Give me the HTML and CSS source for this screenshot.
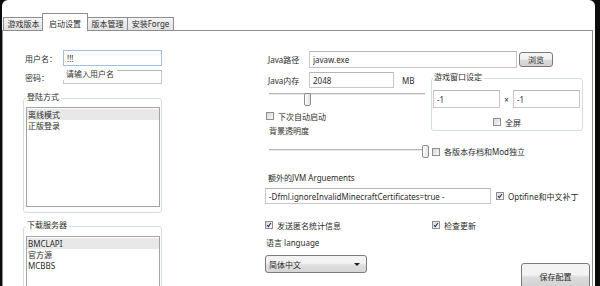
FILE: index.html
```html
<!DOCTYPE html>
<html lang="zh-CN">
<head>
    <meta charset="UTF-8">
    <title>启动设置</title>
    <link rel="stylesheet" href="styles.css">
</head>
<body>
    <div class="window">
        <div class="tabs">
            <div class="tab">游戏版本</div>
            <div class="tab active">启动设置</div>
            <div class="tab">版本管理</div>
            <div class="tab wide">安装Forge</div>
        </div>

        <div class="panel">
            <div class="left">
                <div class="field-row">
                    <label>用户名：</label>
                    <input class="txt focus" type="text" value="!!!">
                </div>
                <div class="field-row short">
                    <label>密码：</label>
                    <span class="pwd-wrap">
                        <input class="txt" type="password">
                        <span class="hint">请输入用户名</span>
                    </span>
                </div>

                <fieldset class="group">
                    <legend>登陆方式</legend>
                    <div class="list tall">
                        <div class="item selected">离线模式</div>
                        <div class="item">正版登录</div>
                    </div>
                </fieldset>

                <fieldset class="group second">
                    <legend>下载服务器</legend>
                    <div class="list">
                        <div class="item selected">BMCLAPI</div>
                        <div class="item">官方源</div>
                        <div class="item">MCBBS</div>
                    </div>
                </fieldset>
            </div>

            <div class="right">
                <div class="row-path">
                    <span class="lbl">Java路径</span>
                    <input class="txt path" type="text" value="javaw.exe">
                    <button class="btn browse">浏览</button>
                </div>

                <div class="mid">
                    <div class="mid-left">
                        <div class="row-mem">
                            <span class="lbl">Java内存</span>
                            <input class="txt mem" type="text" value="2048">
                            <span class="unit">MB</span>
                        </div>
                        <div class="slider">
                            <div class="track"></div>
                            <div class="thumb" style="left: 35px"></div>
                        </div>
                        <div class="opt auto">
                            <span class="check"></span>下次自动启动
                        </div>
                        <div class="lbl-bg">背景透明度</div>
                    </div>

                    <fieldset class="winset">
                        <legend>游戏窗口设定</legend>
                        <div class="xy">
                            <input class="txt size" type="text" value="-1">
                            <span class="times">×</span>
                            <input class="txt size" type="text" value="-1">
                        </div>
                        <div class="opt full">
                            <span class="check"></span>全屏
                        </div>
                    </fieldset>
                </div>

                <div class="row-s2">
                    <div class="slider">
                        <div class="track"></div>
                        <div class="thumb" style="left: 153px"></div>
                    </div>
                    <div class="opt isolate">
                        <span class="check"></span>各版本存档和Mod独立
                    </div>
                </div>

                <div class="lbl-jvm">额外的JVM Arguements</div>
                <div class="row-jvm">
                    <input class="txt jvm" type="text" value="-Dfml.ignoreInvalidMinecraftCertificates=true -">
                    <div class="opt">
                        <span class="check on"><svg viewBox="0 0 8 8"><path d="M1.4 4.2 L3.1 6.2 L6.6 1.3"/></svg></span>Optifine和中文补丁
                    </div>
                </div>

                <div class="row-checks">
                    <div class="opt stats">
                        <span class="check on"><svg viewBox="0 0 8 8"><path d="M1.4 4.2 L3.1 6.2 L6.6 1.3"/></svg></span>发送匿名统计信息
                    </div>
                    <div class="opt">
                        <span class="check on"><svg viewBox="0 0 8 8"><path d="M1.4 4.2 L3.1 6.2 L6.6 1.3"/></svg></span>检查更新
                    </div>
                </div>

                <div class="lbl-lang">语言 language</div>
                <div class="row-bottom">
                    <div class="combo">
                        <span>简体中文</span>
                        <span class="caret"></span>
                    </div>
                    <button class="btn save">保存配置</button>
                </div>
            </div>
        </div>
    </div>
</body>
</html>
```

FILE: styles.css
```css
* {
    box-sizing: border-box;
}

body {
    margin: 0;
    background-color: #0c0c0c;
    font-family: "Noto Sans", "Noto Sans CJK SC", sans-serif;
    font-size: 8px;
    color: #2b2b2b;
    overflow: hidden;
}

.window {
    margin-left: 2px;
    width: 593px;
    height: 286px;
    background-color: #fff;
    border-radius: 6px 6px 0 0;
    overflow: hidden;
}

/* tab strip */
.tabs {
    display: flex;
    align-items: flex-end;
    height: 30px;
    padding-left: 1px;
}

.tab {
    width: 41px;
    height: 13px;
    margin-right: -1px;
    border: 1px solid #8c8e94;
    border-bottom: 0;
    background: linear-gradient(#f4f4f4, #e1e1e1);
    text-align: center;
    line-height: 12px;
    white-space: nowrap;
}

.tab.wide {
    width: 47px;
}

.tab.active {
    position: relative;
    z-index: 1;
    width: 46px;
    height: 18px;
    margin: 0 -1px -1px -1px;
    padding-top: 3px;
    line-height: 13px;
    background: #fff;
}

.panel {
    display: flex;
    width: 591px;
    height: 256px;
    border: 1px solid #8c8e94;
    border-bottom: 0;
}

input, button {
    font-family: inherit;
    font-size: inherit;
    color: inherit;
}

.txt {
    height: 16px;
    padding: 0 3px;
    border: 1px solid #c3c6cb;
    border-top-color: #b3b6bb;
    background: #fff;
    outline: none;
}

.txt.focus {
    border-color: #9fc1de;
}

/* left column */
.left {
    width: 139px;
    margin-left: 20px;
    padding-top: 19px;
}

.field-row {
    display: flex;
    align-items: center;
    height: 16px;
}

.field-row label {
    width: 40px;
    padding-left: 2px;
}

.field-row .txt {
    width: 99px;
}

.field-row.short {
    height: 14px;
    margin-top: 4px;
}

.field-row.short .txt {
    height: 14px;
}

.pwd-wrap {
    position: relative;
    display: flex;
}

.hint {
    position: absolute;
    top: -2px;
    left: 0;
    padding: 0 3px 1px 3px;
    background: #fff;
    line-height: 11px;
    color: #333;
}

.group {
    width: 139px;
    min-width: 0;
    margin: 9px 0 0 0;
    padding: 0 1px 5px 2px;
    border: 1px solid #d3dde4;
    border-radius: 3px;
}

.group legend,
.winset legend {
    padding: 0 2px 3px 1px;
    line-height: 8px;
}

.list {
    width: 134px;
    margin-top: 3px;
    padding-top: 1px;
    border: 1px solid #a2a4a8;
    line-height: 11px;
}

.list.tall {
    height: 100px;
}

.group.second {
    margin-top: 8px;
    padding-bottom: 0;
}

.group.second .list {
    height: 60px;
    margin-top: 4px;
}

.item {
    padding-left: 1px;
}

.item.selected {
    background: #e8e8e8;
}

/* right column */
.right {
    width: 326px;
    margin-left: 102px;
    padding-top: 20px;
}

.lbl {
    width: 45px;
    padding-left: 4px;
    white-space: nowrap;
}

.row-path {
    display: flex;
    align-items: center;
    height: 17px;
}

.txt.path {
    width: 208px;
    height: 17px;
}

.btn {
    padding: 0;
    border: 1px solid #7a7a7a;
    border-radius: 3px;
    background: linear-gradient(#f3f3f3 45%, #dcdcdc 55%, #d0d0d0);
}

.btn.browse {
    width: 34px;
    height: 15px;
    margin-left: 2px;
}

.mid {
    display: flex;
    margin-top: 4px;
}

.mid-left {
    width: 161px;
}

.row-mem {
    display: flex;
    align-items: center;
    height: 16px;
}

.txt.mem {
    width: 85px;
}

.unit {
    margin-left: 8px;
}

.slider {
    position: relative;
    width: 156px;
    height: 13px;
    margin-left: 5px;
}

.track {
    height: 2px;
    margin-top: 4px;
    border-top: 1px solid #b5b5b5;
    border-bottom: 1px solid #eaeaea;
}

.thumb {
    position: absolute;
    top: 0;
    width: 7px;
    height: 13px;
    border: 1px solid #8c8c8c;
    border-radius: 2px;
    background: linear-gradient(90deg, #fdfdfd, #e2e2e2);
}

.mid-left .slider {
    margin-top: 5px;
}

.opt {
    display: flex;
    align-items: center;
    gap: 4px;
    height: 10px;
    white-space: nowrap;
}

.check {
    display: inline-flex;
    width: 8px;
    height: 8px;
    border: 1px solid #8f8f8f;
    background: linear-gradient(135deg, #d8d8d8, #f8f8f8);
}

.check svg {
    width: 6px;
    height: 6px;
    fill: none;
    stroke: #1d2f6a;
    stroke-width: 1.4;
}

.opt.auto {
    margin-top: 5px;
    padding-left: 2px;
}

.lbl-bg {
    margin-top: 5px;
    padding-left: 5px;
    line-height: 10px;
}

.winset {
    width: 152px;
    min-width: 0;
    margin: 1px 0 0 6px;
    padding: 0 1px 3px 1px;
    border: 1px solid #d3dde4;
    border-radius: 3px;
    align-self: flex-start;
}

.xy {
    display: flex;
    align-items: center;
    height: 18px;
    margin-top: 6px;
}

.txt.size {
    width: 67px;
    height: 18px;
}

.times {
    width: 13px;
    text-align: center;
}

.opt.full {
    justify-content: center;
    margin-top: 9px;
}

.row-s2 {
    display: flex;
    align-items: center;
    margin-top: 9px;
}

.opt.isolate {
    margin-left: 7px;
}

.lbl-jvm {
    margin-top: 15px;
    padding-left: 4px;
    line-height: 10px;
}

.row-jvm {
    display: flex;
    align-items: center;
    margin-top: 5px;
}

.txt.jvm {
    width: 226px;
    margin-left: 1px;
}

.row-jvm .opt {
    margin-left: 5px;
}

.row-checks {
    display: flex;
    margin-top: 16px;
}

.opt.stats {
    width: 168px;
    padding-left: 1px;
}

.lbl-lang {
    margin-top: 8px;
    padding-left: 2px;
    line-height: 10px;
}

.row-bottom {
    display: flex;
    align-items: flex-start;
    margin-top: 7px;
}

.combo {
    display: flex;
    align-items: center;
    justify-content: space-between;
    width: 102px;
    height: 18px;
    margin-left: 1px;
    padding: 0 6px 0 3px;
    border: 1px solid #7a7a7a;
    border-radius: 3px;
    background: linear-gradient(#f3f3f3 45%, #e0e0e0 55%, #d6d6d6);
}

.caret {
    width: 0;
    height: 0;
    border-left: 3px solid transparent;
    border-right: 3px solid transparent;
    border-top: 3px solid #222;
}

.btn.save {
    width: 69px;
    height: 26px;
    margin: 8px 0 0 auto;
}
```
